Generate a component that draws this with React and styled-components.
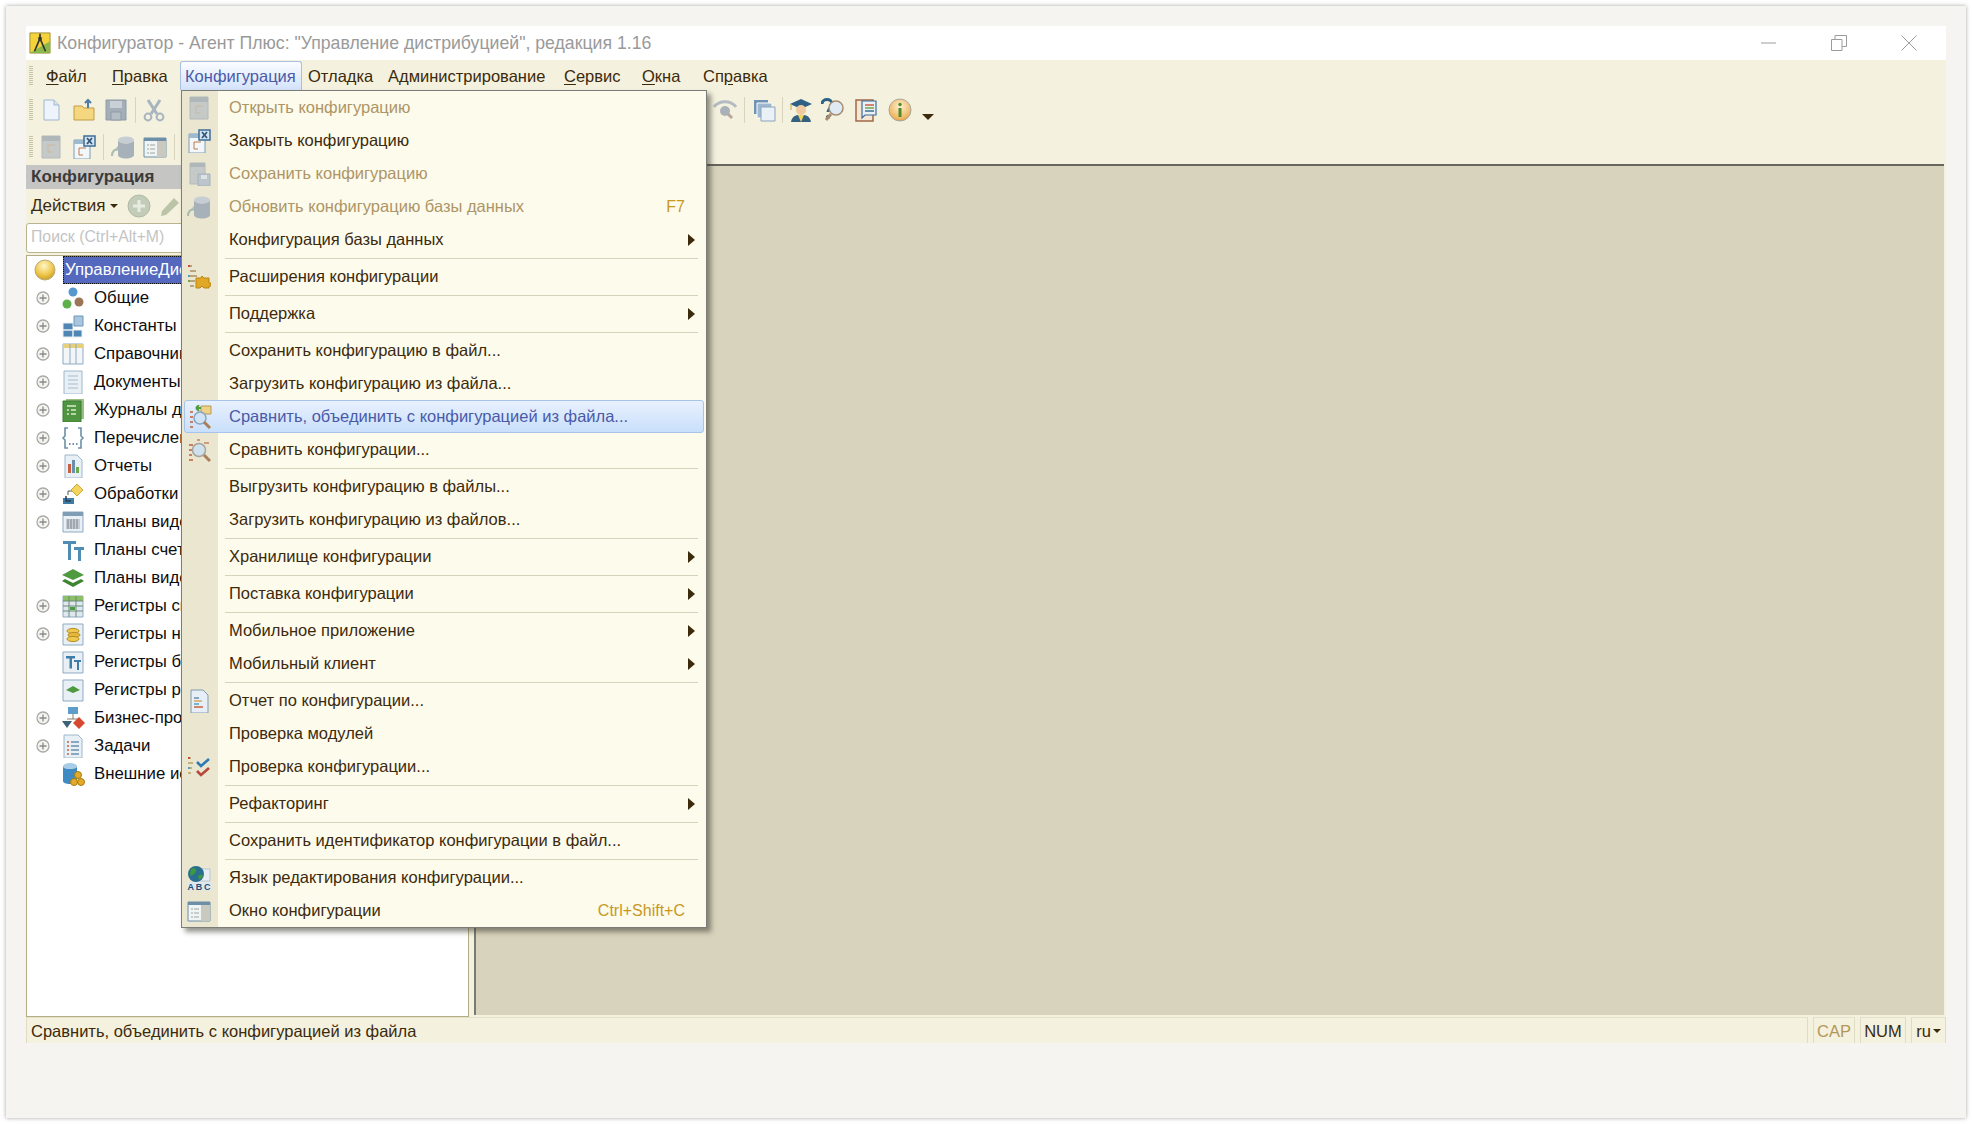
import React from "react";
import styled, { createGlobalStyle } from "styled-components";

const GlobalStyle = createGlobalStyle`
  html, body {
    margin: 0;
    padding: 0;
    background: #fff;
    font-family: "Liberation Sans", Arial, sans-serif;
  }
  * { box-sizing: border-box; }
`;

const Page = styled.div`
  width: 1972px;
  height: 1124px;
  padding: 6px;
  overflow: hidden;
`;
const Paper = styled.div`
  width: 1960px;
  height: 1112px;
  padding: 20px;
  background: #f5f4f1;
  box-shadow: 0 0 4px rgba(90, 90, 90, 0.55);
`;
const Win = styled.div`
  position: relative;
  width: 1920px;
  height: 1017px;
  display: flex;
  flex-direction: column;
  background: #f4f1de;
`;
const TitleBar = styled.div`
  height: 34px;
  flex: none;
  display: flex;
  align-items: center;
  padding: 0 0 0 3px;
  background: #fff;
`;
const TitleText = styled.div`
  flex: 1;
  margin-left: 6px;
  font-size: 17.7px;
  color: #9a9a9a;
  white-space: nowrap;
`;
const WinButtons = styled.div`
  display: flex;
  align-items: center;
  padding-right: 29px;
  gap: 54px;
  svg { display: block; }
`;
const Bar = styled.div`
  display: flex;
  align-items: center;
  height: ${(p) => p.$h}px;
  flex: none;
  padding-left: 3px;
`;
const Handle = styled.div`
  width: 4px;
  height: ${(p) => p.$h || 22}px;
  flex: none;
  background: repeating-linear-gradient(#c9c4a8 0 1px, #f4f1de 1px 2px);
`;
const TopItem = styled.div`
  width: ${(p) => p.$w}px;
  height: 29px;
  flex: none;
  padding-left: ${(p) => (p.$active ? 4 : 5)}px;
  display: flex;
  align-items: center;
  font-size: 16.5px;
  color: #3c2a0c;
  border: 1px solid transparent;
  border-bottom: none;
  white-space: nowrap;
  u { text-underline-offset: 2px; }
  ${(p) =>
    p.$active &&
    `
    color: #4a5aa8;
    border-color: #a9c0e4;
    border-radius: 3px 3px 0 0;
    background: linear-gradient(#fbfcff, #d3e3fb);
  `}
`;
const ToolIcon = styled.div`
  width: ${(p) => p.$w || 33}px;
  height: 28px;
  flex: none;
  display: flex;
  align-items: center;
  justify-content: center;
`;
const ToolSep = styled.div`
  width: 1px;
  height: 26px;
  margin: 0 3px;
  flex: none;
  background: #d8d3bc;
`;
const ToolCaret = styled.div`
  width: 0;
  height: 0;
  flex: none;
  margin: 14px 0 0 3px;
  border-left: 6px solid transparent;
  border-right: 6px solid transparent;
  border-top: 6px solid #3c2a0c;
`;
const Spacer = styled.div`
  width: ${(p) => p.$w}px;
  flex: none;
`;
const Body = styled.div`
  flex: 1;
  min-height: 0;
  display: flex;
  padding-right: 2px;
`;
const Panel = styled.div`
  width: 443px;
  flex: none;
  display: flex;
  flex-direction: column;
  padding-top: 1px;
`;
const PanelHead = styled.div`
  height: 24px;
  flex: none;
  display: flex;
  align-items: center;
  padding-left: 5px;
  background: #c5c5c3;
  font-size: 17px;
  font-weight: bold;
  color: #3a3a3a;
`;
const ActionsRow = styled.div`
  height: 34px;
  flex: none;
  display: flex;
  align-items: center;
  padding-left: 5px;
  font-size: 17px;
  color: #3c2a0c;
`;
const Caret = styled.span`
  display: inline-block;
  width: 0;
  height: 0;
  margin-left: ${(p) => p.$ml || 5}px;
  border-left: 4px solid transparent;
  border-right: 4px solid transparent;
  border-top: 4px solid #3c2a0c;
`;
const Search = styled.div`
  height: 30px;
  flex: none;
  display: flex;
  align-items: center;
  padding: 0 0 2px 4px;
  background: #fff;
  border: 1px solid #b9b48f;
  border-radius: 3px;
  font-size: 15.8px;
  color: #c4c4c4;
`;
const Tree = styled.div`
  flex: 1;
  min-height: 0;
  margin-top: 2px;
  background: #fff;
  border: 1px solid #b3ae88;
  overflow: hidden;
`;
const TreeRow = styled.div`
  height: 28px;
  display: flex;
  align-items: center;
  padding-left: ${(p) => (p.$root ? 6 : 9)}px;
  font-size: 16.8px;
  color: #0d0d0d;
  white-space: nowrap;
`;
const Expander = styled.div`
  width: 14px;
  height: 14px;
  flex: none;
  margin-right: 11px;
  display: flex;
  svg { display: block; }
`;
const TreeIcon = styled.div`
  width: 24px;
  height: 24px;
  flex: none;
  margin-right: 9px;
`;
const RootLabel = styled.div`
  height: 28px;
  margin-left: 6px;
  padding: 0 3px 0 1px;
  display: flex;
  align-items: center;
  background: #5468bd;
  color: #fff;
  border: 1px dotted #111;
`;
const Workspace = styled.div`
  flex: 1;
  margin-left: 5px;
  margin-bottom: 2px;
  background: #d8d3bc;
  border-left: 2px solid #7a7a74;
  border-top: 2px solid #66665f;
`;
const Status = styled.div`
  height: 26px;
  flex: none;
  display: flex;
  font-size: 16.5px;
  color: #3c2a0c;
  align-items: stretch;
`;
const StatusCell = styled.div`
  flex: ${(p) => (p.$grow ? 1 : "none")};
  width: ${(p) => (p.$w ? p.$w + "px" : "auto")};
  margin-left: ${(p) => p.$ml || 0}px;
  padding: 1px ${(p) => (p.$grow ? 4 : 0)}px 0;
  display: flex;
  align-items: center;
  justify-content: ${(p) => (p.$grow ? "flex-start" : "center")};
  color: ${(p) => (p.$off ? "#b3965a" : "inherit")};
  border: 1px solid #e0dcc2;
  border-bottom: none;
  border-top-color: #e6e2ca;
`;

/* dropdown lies over the panel and the workspace */
const Menu = styled.div`
  position: absolute;
  left: 155px;
  top: 64px;
  width: 526px;
  padding: 0 1px;
  background: linear-gradient(90deg, #ebe6d0 36px, #fdfbec 36px);
  border: 1px solid #7c7c78;
  box-shadow: 4px 4px 5px rgba(60, 60, 50, 0.55);
`;
const MenuRow = styled.div`
  position: relative;
  height: 33px;
  display: flex;
  align-items: center;
  font-size: 16.5px;
  white-space: nowrap;
  color: ${(p) => (p.$off ? "#ad9566" : p.$hot ? "#4a5aa8" : "#3c2a0c")};
  ${(p) =>
    p.$hot &&
    `
    margin: 0 1px;
    background: linear-gradient(#e8f1fe, #c9dffb);
    border: 1px solid #a9c4ea;
    border-radius: 3px;
  `}
`;
const MenuIcon = styled.div`
  width: ${(p) => (p.$hot ? 30 : 32)}px;
  flex: none;
  display: flex;
  justify-content: center;
  svg { display: block; }
`;
const MenuText = styled.div`
  flex: 1;
  padding-left: 14px;
`;
const Shortcut = styled.div`
  padding-right: 20px;
  font-size: 16px;
  color: #c8981f;
`;
const Arrow = styled.div`
  width: 0;
  height: 0;
  margin-right: 10px;
  border-top: 6px solid transparent;
  border-bottom: 6px solid transparent;
  border-left: 7px solid #3c2a0c;
`;
const MenuSep = styled.div`
  height: 4px;
  margin-left: 42px;
  margin-right: 7px;
  display: flex;
  align-items: center;
  &::after {
    content: "";
    flex: 1;
    height: 1px;
    background: #d6d2bc;
  }
`;

const shapes = {
  new: (
    <>
      <path d="M5 2h10l5 5v15H5z" fill="#eef4fb" stroke="#9fb6cd" />
      <path d="M15 2v5h5" fill="#d8e6f3" stroke="#9fb6cd" />
    </>
  ),
  open: (
    <>
      <path d="M2 8h8l2 2h10v12H2z" fill="#f4d77e" stroke="#c29e45" />
      <path d="M16 10V2m-3 3l3-3 3 3" fill="none" stroke="#4f7da6" strokeWidth="2" />
    </>
  ),
  save: (
    <>
      <path d="M2 2h20v20H2z" fill="#a3aeb8" stroke="#8f9ba5" />
      <path d="M6 3h12v7H6z" fill="#c9d0d6" />
      <path d="M7 14h10v8H7z" fill="#b6bfc7" stroke="#8f9ba5" />
    </>
  ),
  cut: (
    <>
      <path d="M6 2l9 14M18 2L9 16" stroke="#a7b5c0" strokeWidth="3" fill="none" />
      <circle cx="6" cy="19" r="3.4" fill="none" stroke="#a7b5c0" strokeWidth="2" />
      <circle cx="18" cy="19" r="3.4" fill="none" stroke="#a7b5c0" strokeWidth="2" />
    </>
  ),
  tree: (
    <>
      <path d="M3 1h18v22H3z" fill="#c5cac9" stroke="#b4bab9" />
      <path d="M3 1h18v5H3z" fill="#b0b7b8" />
      <path d="M9 10h3m-3 0v7h4m-1-7h4" stroke="#c9b6a0" fill="none" />
    </>
  ),
  closeCfg: (
    <>
      <path d="M2 5h16v19H2z" fill="#f2f7fb" stroke="#7f9cb5" />
      <path d="M2 5h16v4H2z" fill="#9fb9cf" />
      <path d="M7 13h3m-3 0v7h4m-1-7h4" stroke="#c07a4a" fill="none" />
      <path d="M12 1h11v10H12z" fill="#d6e4f1" stroke="#3d6e97" strokeWidth="1.5" />
      <path d="M15 3l5 6m0-6l-5 6" stroke="#31577a" strokeWidth="1.8" />
    </>
  ),
  saveCfg: (
    <>
      <path d="M3 1h15v21H3z" fill="#c5cac9" stroke="#b4bab9" />
      <path d="M3 1h15v4H3z" fill="#b0b7b8" />
      <path d="M11 12h12v12H11z" fill="#bcc5cb" stroke="#a7b0b7" />
      <path d="M14 13h6v4h-6z" fill="#dde2e5" />
    </>
  ),
  db: (
    <>
      <path d="M1 21c0-5 3-7 7-7" stroke="#a9bdb0" strokeWidth="2" fill="none" />
      <path d="M6 11l3 3-4 2z" fill="#a9bdb0" />
      <ellipse cx="15" cy="5" rx="8" ry="3.5" fill="#c6ced4" />
      <path d="M7 5v15c0 2 4 3.500 8 3.500s8-1.500 8-3.500V5c0 2-4 3.500-8 3.500S7 7 7 5z" fill="#a7b1ba" />
    </>
  ),
  cfgWin: (
    <>
      <path d="M1 3h22v19H1z" fill="#f1f4f4" stroke="#6d8fa8" />
      <path d="M1 3h22v3H1z" fill="#6d8fa8" />
      <path d="M14 6h9v16h-9z" fill="#c9c9c0" />
      <path d="M4 10h2m1 0h5M4 14h2m1 0h5M4 18h2m1 0h5" stroke="#9aa8a0" />
    </>
  ),
  ext: (
    <>
      <path d="M3 1h2M3 6h6M3 11h7M3 16h5M3 21h4" stroke="#b8a57f" strokeWidth="2" />
      <path d="M1 1h2" stroke="#d14a3a" strokeWidth="2" />
      <path d="M1 11h2" stroke="#4ca3c9" strokeWidth="2" />
      <path d="M1 16h2" stroke="#6caa4c" strokeWidth="2" />
      <path d="M9 13h5l1-2 2 2h5v5h2v3h-2v2h-5l-2-2-2 2H9z" fill="#e0a826" stroke="#b98413" />
    </>
  ),
  merge: (
    <>
      <path d="M2 7h3M2 12h3M2 17h3M2 22h3" stroke="#c97f62" strokeWidth="2" />
      <path d="M13 1h10v8H13z" fill="#eed28a" stroke="#b89a50" />
      <path d="M13 3h-5M8 3l3-3M8 3l3 3" stroke="#4f9c3c" strokeWidth="2" fill="none" />
      <circle cx="12" cy="13" r="6" fill="#cfe2f6" stroke="#8aa4bd" strokeWidth="1.500" />
      <path d="M16 17l6 6" stroke="#a97f5a" strokeWidth="3" />
    </>
  ),
  compare: (
    <>
      <path d="M2 7h4M2 12h3M2 17h3M2 22h4" stroke="#c97f62" strokeWidth="2" />
      <path d="M10 2h3M17 5h5" stroke="#d19a80" strokeWidth="2" />
      <circle cx="12" cy="12" r="6.500" fill="#cfe0ee" stroke="#a9a49a" strokeWidth="1.500" />
      <path d="M17 17l6 6" stroke="#a97f5a" strokeWidth="3" />
    </>
  ),
  report: (
    <>
      <path d="M4 1h12l5 5v18H4z" fill="#e6eff7" stroke="#7f9ab2" />
      <path d="M7 9h5" stroke="#6c8ea8" strokeWidth="1.500" />
      <path d="M7 12h8" stroke="#d6a85c" strokeWidth="1.500" />
      <path d="M7 15h5" stroke="#4ca3c9" strokeWidth="1.500" />
      <path d="M7 18h9" stroke="#c9603f" strokeWidth="1.500" />
    </>
  ),
  check: (
    <>
      <path d="M1 3h3M1 8h5M1 13h4M1 18h3" stroke="#c3b27d" strokeWidth="2" />
      <path d="M1 3h2" stroke="#d14a3a" strokeWidth="2" />
      <path d="M1 13h2" stroke="#4ca3c9" strokeWidth="2" />
      <path d="M10 7l4 4 8-7" stroke="#2f79b5" strokeWidth="2.600" fill="none" />
      <path d="M10 16l4 4 8-7" stroke="#b8483e" strokeWidth="2.600" fill="none" />
    </>
  ),
  lang: (
    <>
      <path d="M13 3h10v12H13z" fill="#e9eef2" stroke="#b6c6d4" />
      <circle cx="9" cy="8" r="8" fill="#2a6f8f" />
      <path d="M4 3c4-2 7 1 4 4S4 11 3 8zM11 10l4-2 1 3-4 3z" fill="#3d9a3f" />
      <path d="M0 16h24v8H0z" fill="#dfe8ee" />
      <text x="0.5" y="23.500" fontFamily="Liberation Sans" fontWeight="bold" fontSize="9" fill="#1f4f75" textLength="23">ABC</text>
    </>
  ),
  root: (
    <>
      <defs>
        <radialGradient id="rootBall" cx="0.45" cy="0.3" r="0.8">
          <stop offset="0" stopColor="#fff6c8" />
          <stop offset="0.55" stopColor="#eec74d" />
          <stop offset="1" stopColor="#c08f15" />
        </radialGradient>
      </defs>
      <circle cx="12" cy="12" r="10" fill="url(#rootBall)" stroke="#bba974" />
    </>
  ),
  common: (
    <>
      <circle cx="12" cy="6" r="4.500" fill="#5799cf" />
      <circle cx="6" cy="18" r="4.500" fill="#5eb04d" />
      <circle cx="18" cy="16" r="4.500" fill="#9c7559" />
    </>
  ),
  constants: (
    <>
      <path d="M2 9h10v7H2zM2 16h10v7H2zM12 16h9v7h-9z" fill="#4f86b4" stroke="#e7eef4" />
      <path d="M13 2h9v10h-9z" fill="#a9c6de" stroke="#6c97bb" />
    </>
  ),
  catalog: (
    <>
      <path d="M2 2h20v20H2z" fill="#f2f6f9" stroke="#8eabc2" />
      <path d="M2 2h20v4H2z" fill="#e6d078" />
      <path d="M9 2v20M15 2v20" stroke="#8eabc2" />
    </>
  ),
  doc: (
    <>
      <path d="M3 1h18v23H3z" fill="#e8f0f6" stroke="#9eb6ca" />
      <path d="M7 6h10M7 10h10M7 14h10M7 18h10" stroke="#a9bccb" />
    </>
  ),
  journal: (
    <>
      <path d="M5 1h18v20H5z" fill="#9bbd84" />
      <path d="M2 3h18v21H2z" fill="#4f9440" stroke="#3d7d32" />
      <path d="M6 8h9M6 12h2M10 12h5M6 16h2M10 16h5" stroke="#dcebd0" strokeWidth="1.500" />
    </>
  ),
  enum: (
    <>
      <path d="M7 2H4v8l-2 2 2 2v8h3M17 2h3v8l2 2-2 2v8h-3" fill="none" stroke="#6d8fa8" strokeWidth="1.600" />
      <path d="M8 18h1.500M11.500 18H13M15 18h1.500" stroke="#3d6e97" strokeWidth="1.600" />
    </>
  ),
  reports: (
    <>
      <path d="M4 1h12l5 5v18H4z" fill="#e8f0f6" stroke="#9eb6ca" />
      <path d="M7 10h3v9H7z" fill="#c9603f" />
      <path d="M11 6h3v13h-3z" fill="#6a8fae" />
      <path d="M15 13h3v6h-3z" fill="#6caa4c" />
    </>
  ),
  process: (
    <>
      <path d="M2 16h11v6H2z" fill="#3d7da8" />
      <path d="M7 13V9m0 0h4" stroke="#555" fill="none" />
      <path d="M16 2l6 6-6 6-6-6z" fill="#f1d560" stroke="#c9a93a" />
      <path d="M5 14v5h5" stroke="#2c3f50" strokeWidth="1.500" fill="none" />
    </>
  ),
  plan: (
    <>
      <path d="M2 2h20v20H2z" fill="#e8f0f6" stroke="#8eabc2" />
      <path d="M2 2h20v4H2z" fill="#7f9db5" />
      <path d="M5 9h14v10H5z" fill="#c6ced4" />
      <path d="M7 9v10M10 9v10M13 9v10M16 9v10" stroke="#78838c" />
    </>
  ),
  accounts: (
    <>
      <path d="M2 3h13v3h-5v16H7V6H2zM13 9h10v3h-3v11h-3V12h-4z" fill="#4f8db5" />
    </>
  ),
  layers: (
    <>
      <path d="M12 3l11 6-11 5L1 9z" fill="#4e9a3e" />
      <path d="M4 13l8 4 8-4 3 2-11 6L1 15z" fill="#3d8530" />
    </>
  ),
  regInfo: (
    <>
      <path d="M2 2h20v21H2z" fill="#dfe8ee" stroke="#8eabc2" />
      <path d="M2 2h20v5H2z" fill="#8cbf66" />
      <path d="M8 2v21M15 2v21M2 7h20M2 12h20M2 17h20" stroke="#6d8a78" />
      <path d="M9 13h5v3H9z" fill="#4e9a3e" />
    </>
  ),
  regAcc: (
    <>
      <path d="M2 2h20v21H2z" fill="#e8f0f6" stroke="#8eabc2" />
      <ellipse cx="12" cy="9" rx="6" ry="2.600" fill="#eec74d" stroke="#b98d20" />
      <ellipse cx="13" cy="13" rx="6" ry="2.600" fill="#e5b83c" stroke="#b98d20" />
      <ellipse cx="12" cy="17" rx="6" ry="2.600" fill="#eec74d" stroke="#b98d20" />
    </>
  ),
  regBook: (
    <>
      <path d="M2 2h20v21H2z" fill="#e8f0f6" stroke="#8eabc2" />
      <path d="M5 6h9v2.500h-3v10H8.500v-10H5zM13 10h7v2h-2v8h-2v-8h-3z" fill="#3d7da8" />
    </>
  ),
  regCalc: (
    <>
      <path d="M2 2h20v21H2z" fill="#e8f0f6" stroke="#8eabc2" />
      <path d="M12 8l7 4-7 3-7-3z" fill="#4e9a3e" />
    </>
  ),
  bizProc: (
    <>
      <path d="M7 1h10v7H7z" fill="#5e9cc9" />
      <path d="M12 8v5H6m6 0h6" stroke="#8a7a70" fill="none" />
      <path d="M1 15h10l-5 7z" fill="#3d5f78" />
      <path d="M18 11l6 6-6 6-6-6z" fill="#d6482f" />
    </>
  ),
  tasks: (
    <>
      <path d="M3 1h14l4 4v19H3z" fill="#e8f0f6" stroke="#9eb6ca" />
      <path d="M6 8h2M6 12h2M6 16h2M6 20h2" stroke="#c9603f" strokeWidth="1.500" />
      <path d="M10 8h8M10 12h8M10 16h8M10 20h8" stroke="#6a8fae" strokeWidth="1.500" />
    </>
  ),
  extSrc: (
    <>
      <ellipse cx="9" cy="4" rx="7" ry="3" fill="#a9cce6" />
      <path d="M2 4v15c0 2 3 3 7 3s7-1 7-3V4c0 2-3 3-7 3S2 6 2 4z" fill="#3f8ac2" />
      <circle cx="17" cy="13" r="3.500" fill="#e3aa2c" stroke="#a97c12" />
      <circle cx="13" cy="20" r="3.500" fill="#e3aa2c" stroke="#a97c12" />
      <circle cx="20" cy="20" r="3.500" fill="#e3aa2c" stroke="#a97c12" />
    </>
  ),
  plus: (
    <>
      <circle cx="12" cy="12" r="11" fill="#c2ccb8" stroke="#b1baa8" />
      <path d="M12 6v12M6 12h12" stroke="#e6ecdf" strokeWidth="3" />
    </>
  ),
  pencil: (
    <>
      <path d="M4 17L16 4l5 5L8 21l-5 1z" fill="#bcc4a8" />
    </>
  ),
  eye: (
    <>
      <path d="M1 9c5-7 17-7 22 0" stroke="#b3bcc2" strokeWidth="3" fill="none" />
      <circle cx="12" cy="13" r="5" fill="#a9b2b8" />
      <path d="M15 16l4 4" stroke="#b5a8a0" strokeWidth="3" />
    </>
  ),
  windows: (
    <>
      <path d="M2 2h14v14H2z" fill="#6e93b3" />
      <path d="M5 5h15v15H5z" fill="#9db8cf" stroke="#fff" />
      <path d="M9 9h14v14H9z" fill="#e9f0f6" stroke="#8aa4bb" />
    </>
  ),
  teacher: (
    <>
      <path d="M12 1l11 5-11 5L1 6z" fill="#2e5f85" />
      <path d="M2 6v6" stroke="#c9a93a" />
      <circle cx="12" cy="12" r="5" fill="#f0c9a0" />
      <path d="M2 24c1-6 5-7 8-7l2 3 2-3c3 0 7 1 8 7z" fill="#35607f" />
      <path d="M9 17l3 7 3-7z" fill="#f1d560" />
    </>
  ),
  helpFind: (
    <>
      <path d="M1 6c0-6 10-6 10 0 0 4-4 4-4 8" fill="none" stroke="#2c6288" strokeWidth="3" />
      <circle cx="7" cy="19" r="2" fill="#2c6288" />
      <circle cx="15" cy="10" r="7" fill="#dfeaf5" stroke="#a88c70" strokeWidth="1.500" />
      <path d="M10 16l-5 6" stroke="#a88c70" strokeWidth="3" />
    </>
  ),
  notes: (
    <>
      <path d="M3 2h17v21H3z" fill="#f6e6d4" stroke="#a0694a" strokeWidth="1.500" />
      <path d="M9 3h14v14H12l-3 3z" fill="#e9f0f6" stroke="#3d6e97" strokeWidth="1.200" />
      <path d="M12 7h9" stroke="#c9603f" strokeWidth="1.500" />
      <path d="M12 10h9" stroke="#6caa4c" strokeWidth="1.500" />
      <path d="M12 13h9" stroke="#3d6e97" strokeWidth="1.500" />
    </>
  ),
  info: (
    <>
      <defs>
        <radialGradient id="infoBall" cx="0.5" cy="0.35" r="0.75">
          <stop offset="0" stopColor="#fdf0d0" />
          <stop offset="0.7" stopColor="#f0b865" />
          <stop offset="1" stopColor="#d68a2c" />
        </radialGradient>
      </defs>
      <circle cx="12" cy="12" r="11" fill="url(#infoBall)" stroke="#a8a8a0" />
      <circle cx="12" cy="6.500" r="1.700" fill="#4f8a2c" />
      <path d="M12 10v9" stroke="#4f8a2c" strokeWidth="3" />
    </>
  ),
  logo: (
    <>
      <path d="M1 1h22v22H1z" fill="#f3d23a" stroke="#9a8b3a" />
      <path d="M1 23L23 10v13z" fill="#8bb84a" />
      <path d="M12 2v5m0 0l-6 14m6-14l6 14" stroke="#333" strokeWidth="1.800" fill="none" />
      <circle cx="12" cy="7" r="2" fill="#333" />
    </>
  ),
};

const Icon = ({ name, size = 24 }) => (
  <svg width={size} height={size} viewBox="0 0 24 24">
    {shapes[name]}
  </svg>
);

const Exp = () => (
  <svg width="14" height="14" viewBox="0 0 14 14">
    <circle cx="7" cy="7" r="6" fill="#f4f4f2" stroke="#a9a9a5" strokeWidth="1.300" />
    <path d="M3.500 7h7M7 3.500v7" stroke="#8a8a86" strokeWidth="1.300" />
  </svg>
);

const topMenu = [
  { w: 66, label: <><u>Ф</u>айл</> },
  { w: 74, label: <><u>П</u>равка</> },
  { w: 122, label: "Конфигурация", active: true },
  { w: 80, label: "Отладка" },
  { w: 176, label: "Администрирование" },
  { w: 78, label: <><u>С</u>ервис</> },
  { w: 61, label: <><u>О</u>кна</> },
  { w: 80, label: <>Сп<u>р</u>авка</> },
];

const treeItems = [
  { icon: "common", text: "Общие", exp: true },
  { icon: "constants", text: "Константы", exp: true },
  { icon: "catalog", text: "Справочники", exp: true },
  { icon: "doc", text: "Документы", exp: true },
  { icon: "journal", text: "Журналы документов", exp: true },
  { icon: "enum", text: "Перечисления", exp: true },
  { icon: "reports", text: "Отчеты", exp: true },
  { icon: "process", text: "Обработки", exp: true },
  { icon: "plan", text: "Планы видов характеристик", exp: true },
  { icon: "accounts", text: "Планы счетов" },
  { icon: "layers", text: "Планы видов расчета" },
  { icon: "regInfo", text: "Регистры сведений", exp: true },
  { icon: "regAcc", text: "Регистры накопления", exp: true },
  { icon: "regBook", text: "Регистры бухгалтерии" },
  { icon: "regCalc", text: "Регистры расчета" },
  { icon: "bizProc", text: "Бизнес-процессы", exp: true },
  { icon: "tasks", text: "Задачи", exp: true },
  { icon: "extSrc", text: "Внешние источники данных" },
];

const menuItems = [
  { icon: "tree", text: "Открыть конфигурацию", off: true },
  { icon: "closeCfg", text: "Закрыть конфигурацию" },
  { icon: "saveCfg", text: "Сохранить конфигурацию", off: true },
  { icon: "db", text: "Обновить конфигурацию базы данных", off: true, key: "F7" },
  { text: "Конфигурация базы данных", sub: true },
  "sep",
  { icon: "ext", text: "Расширения конфигурации" },
  "sep",
  { text: "Поддержка", sub: true },
  "sep",
  { text: "Сохранить конфигурацию в файл..." },
  { text: "Загрузить конфигурацию из файла..." },
  { icon: "merge", text: "Сравнить, объединить с конфигурацией из файла...", hot: true },
  { icon: "compare", text: "Сравнить конфигурации..." },
  "sep",
  { text: "Выгрузить конфигурацию в файлы..." },
  { text: "Загрузить конфигурацию из файлов..." },
  "sep",
  { text: "Хранилище конфигурации", sub: true },
  "sep",
  { text: "Поставка конфигурации", sub: true },
  "sep",
  { text: "Мобильное приложение", sub: true },
  { text: "Мобильный клиент", sub: true },
  "sep",
  { icon: "report", text: "Отчет по конфигурации..." },
  { text: "Проверка модулей" },
  { icon: "check", text: "Проверка конфигурации..." },
  "sep",
  { text: "Рефакторинг", sub: true },
  "sep",
  { text: "Сохранить идентификатор конфигурации в файл..." },
  "sep",
  { icon: "lang", text: "Язык редактирования конфигурации..." },
  { icon: "cfgWin", text: "Окно конфигурации", key: "Ctrl+Shift+C" },
];

export default function App() {
  return (
    <Page>
      <GlobalStyle />
      <Paper>
        <Win>
          <TitleBar>
            <Icon name="logo" size={22} />
            <TitleText>Конфигуратор - Агент Плюс: "Управление дистрибуцией", редакция 1.16</TitleText>
            <WinButtons>
              <svg width="16" height="16" viewBox="0 0 16 16">
                <path d="M0 8h15" stroke="#9c9c9c" />
              </svg>
              <svg width="16" height="16" viewBox="0 0 16 16">
                <path d="M.5 4.500h10.500v11H.5zM4 4.500V.5h11.500v11H11" fill="none" stroke="#9c9c9c" />
              </svg>
              <svg width="16" height="16" viewBox="0 0 16 16">
                <path d="M.5.5l15 15M15.500.5l-15 15" stroke="#9c9c9c" />
              </svg>
            </WinButtons>
          </TitleBar>
          <Bar $h={31}>
            <Handle $h={19} />
            <Spacer $w={7} />
            {topMenu.map((m, i) => (
              <TopItem key={i} $w={m.w} $active={m.active}>
                {m.label}
              </TopItem>
            ))}
          </Bar>
          <Bar $h={38}>
            <Handle />
            <Spacer $w={1} />
            <ToolIcon><Icon name="new" /></ToolIcon>
            <ToolIcon><Icon name="open" /></ToolIcon>
            <ToolIcon $w={32}><Icon name="save" /></ToolIcon>
            <ToolSep />
            <ToolIcon $w={30}><Icon name="cut" /></ToolIcon>
            <Spacer $w={539} />
            <ToolIcon><Icon name="eye" /></ToolIcon>
            <ToolSep />
            <ToolIcon $w={31}><Icon name="windows" /></ToolIcon>
            <ToolSep />
            <ToolIcon $w={30}><Icon name="teacher" /></ToolIcon>
            <ToolIcon $w={33}><Icon name="helpFind" /></ToolIcon>
            <ToolIcon $w={32}><Icon name="notes" /></ToolIcon>
            <ToolIcon $w={38}><Icon name="info" /></ToolIcon>
            <ToolCaret />
          </Bar>
          <Bar $h={35}>
            <Handle />
            <Spacer $w={1} />
            <ToolIcon><Icon name="tree" /></ToolIcon>
            <ToolIcon><Icon name="closeCfg" /></ToolIcon>
            <ToolSep />
            <ToolIcon $w={31}><Icon name="db" /></ToolIcon>
            <ToolIcon><Icon name="cfgWin" /></ToolIcon>
            <ToolSep />
          </Bar>
          <Body>
            <Panel>
              <PanelHead>Конфигурация</PanelHead>
              <ActionsRow>
                Действия
                <Caret />
                <Spacer $w={9} />
                <Icon name="plus" />
                <Spacer $w={7} />
                <Icon name="pencil" />
              </ActionsRow>
              <Search>Поиск (Ctrl+Alt+M)</Search>
              <Tree>
                <TreeRow $root>
                  <Icon name="root" />
                  <RootLabel>УправлениеДистрибуцией</RootLabel>
                </TreeRow>
                {treeItems.map((t) => (
                  <TreeRow key={t.text}>
                    <Expander>{t.exp && <Exp />}</Expander>
                    <TreeIcon><Icon name={t.icon} /></TreeIcon>
                    {t.text}
                  </TreeRow>
                ))}
              </Tree>
            </Panel>
            <Workspace />
          </Body>
          <Status>
            <StatusCell $grow>Сравнить, объединить с конфигурацией из файла</StatusCell>
            <StatusCell $w={42} $ml={5} $off>CAP</StatusCell>
            <StatusCell $w={46} $ml={5}>NUM</StatusCell>
            <StatusCell $w={35} $ml={5}>
              ru
              <Caret $ml={2} />
            </StatusCell>
          </Status>
          <Menu>
            {menuItems.map((m, i) =>
              m === "sep" ? (
                <MenuSep key={i} />
              ) : (
                <MenuRow key={i} $off={m.off} $hot={m.hot}>
                  <MenuIcon $hot={m.hot}>{m.icon && <Icon name={m.icon} />}</MenuIcon>
                  <MenuText>{m.text}</MenuText>
                  {m.key && <Shortcut>{m.key}</Shortcut>}
                  {m.sub && <Arrow />}
                </MenuRow>
              )
            )}
          </Menu>
        </Win>
      </Paper>
    </Page>
  );
}
